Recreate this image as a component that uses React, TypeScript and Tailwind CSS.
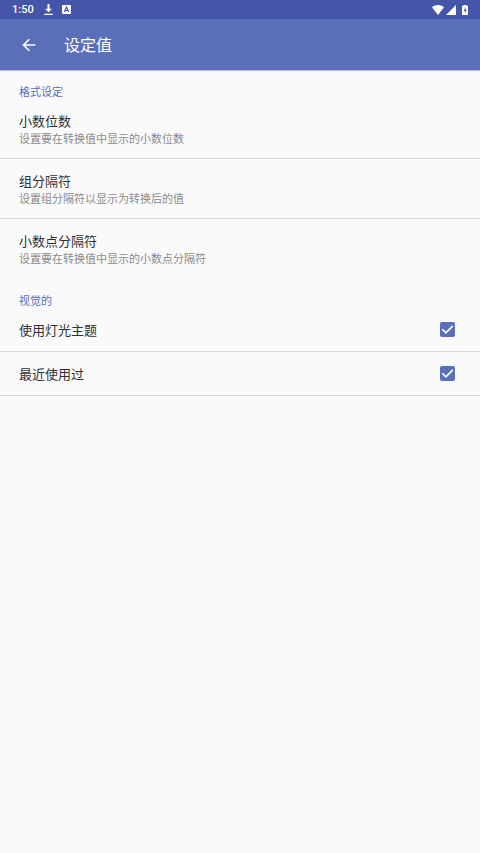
import { useState } from 'react';

const formatItems = [
    { title: '小数位数', summary: '设置要在转换值中显示的小数位数' },
    { title: '组分隔符', summary: '设置组分隔符以显示为转换后的值' },
    { title: '小数点分隔符', summary: '设置要在转换值中显示的小数点分隔符' },
];

function StatusBar() {
    return (
        <div className="flex h-[19px] items-center justify-between bg-[#4555a8] px-3 text-white">
            <div className="flex items-center">
                <span className="w-8 pt-px font-['Roboto',sans-serif] text-[11px] leading-[18px] font-medium">1:50</span>
                <svg className="h-[11px] w-[9px]" viewBox="0 0 9 11" fill="currentColor" aria-hidden="true">
                    <path d="M3.5 0h2v4.700h2.400L4.500 8.200 1.100 4.700h2.400zM.2 9.700h8.600V11H.2z" />
                </svg>
                <svg className="ml-[9px] h-[9px] w-[9px]" viewBox="0 0 9 9" aria-hidden="true">
                    <rect width="9" height="9" rx="1" fill="#fff" />
                    <path d="M2.300 7 4.500 2l2.200 5M3.200 5.500h2.600" fill="none" stroke="#4555a8" strokeWidth="1.200" />
                </svg>
            </div>
            <div className="flex items-center">
                <svg className="h-[10px] w-3" viewBox="0 0 12 10" fill="currentColor" aria-hidden="true">
                    <path d="M6 10 0 2.300C1.600.9 3.700 0 6 0s4.400.9 6 2.300z" />
                </svg>
                <svg className="ml-[2px] h-[10px] w-[10px]" viewBox="0 0 10 10" fill="currentColor" aria-hidden="true">
                    <path d="M10 0v10H0z" />
                </svg>
                <svg className="ml-[6px] h-[10px] w-[6px]" viewBox="0 0 6 10" aria-hidden="true">
                    <path d="M1.500 0h3v.8H5.500q.5 0 .5.5v8.200q0 .5-.5.5h-5Q0 10 0 9.500V1.300Q0 .8.5.8h1z" fill="#fff" />
                    <path d="M3.500 2.200 1.500 5.700h1.300v2.600l2-3.600H3.500z" fill="#4555a8" />
                </svg>
            </div>
        </div>
    );
}

function SectionTitle({ children }: { children: string }) {
    return <h2 className="px-[19px] pt-[13px] text-[11px] leading-4 text-[#5970b9]">{children}</h2>;
}

function CheckRow({ label }: { label: string }) {
    const [checked, setChecked] = useState(true);

    return (
        <label className="flex h-11 items-center justify-between border-b border-[#d9d9d9] pr-[25px] pl-[19px] text-[13px] text-[#303030]">
            {label}
            <span className="grid h-[15px] w-[15px]">
                <input
                    type="checkbox"
                    checked={checked}
                    onChange={(e) => setChecked(e.target.checked)}
                    className="col-start-1 row-start-1 h-[15px] w-[15px] appearance-none rounded-[2px] border-2 border-[#757575] checked:border-[#5970b9] checked:bg-[#5970b9]"
                />
                {checked && (
                    <svg className="pointer-events-none col-start-1 row-start-1 h-[15px] w-[15px]" viewBox="0 0 15 15" fill="none" aria-hidden="true">
                        <path d="m2.300 7.300 3.600 3.600 6.900-7" stroke="#fff" strokeWidth="1.600" />
                    </svg>
                )}
            </span>
        </label>
    );
}

export default function App() {
    return (
        <div className="min-h-screen bg-[#fafafa] font-['Noto_Sans_CJK_SC',sans-serif]">
            <StatusBar />
            <header className="flex h-[51px] items-center bg-[#5970b9] pl-[22px] text-white shadow-[0_1px_1px_#b9c0df]">
                <button type="button" aria-label="返回" className="mr-7">
                    <svg className="h-[14px] w-[14px]" viewBox="0 0 14 14" fill="none" stroke="currentColor" strokeWidth="1.600" aria-hidden="true">
                        <path d="M13.300 7H2M7.300 1.200 1.500 7l5.800 5.800" />
                    </svg>
                </button>
                <h1 className="pb-[2px] text-base">设定值</h1>
            </header>
            <main>
                <section>
                    <SectionTitle>格式设定</SectionTitle>
                    <ul>
                        {formatItems.map((item) => (
                            <li key={item.title} className="border-b border-[#d9d9d9] last:border-transparent">
                                <button type="button" className="block w-full px-[19px] pt-[13px] pb-3 text-left">
                                    <span className="block text-[13px] leading-[18px] text-[#303030]">{item.title}</span>
                                    <span className="block text-[11px] leading-4 text-[#8a8a8a]">{item.summary}</span>
                                </button>
                            </li>
                        ))}
                    </ul>
                </section>
                <section>
                    <SectionTitle>视觉的</SectionTitle>
                    <CheckRow label="使用灯光主题" />
                    <CheckRow label="最近使用过" />
                </section>
            </main>
        </div>
    );
}
